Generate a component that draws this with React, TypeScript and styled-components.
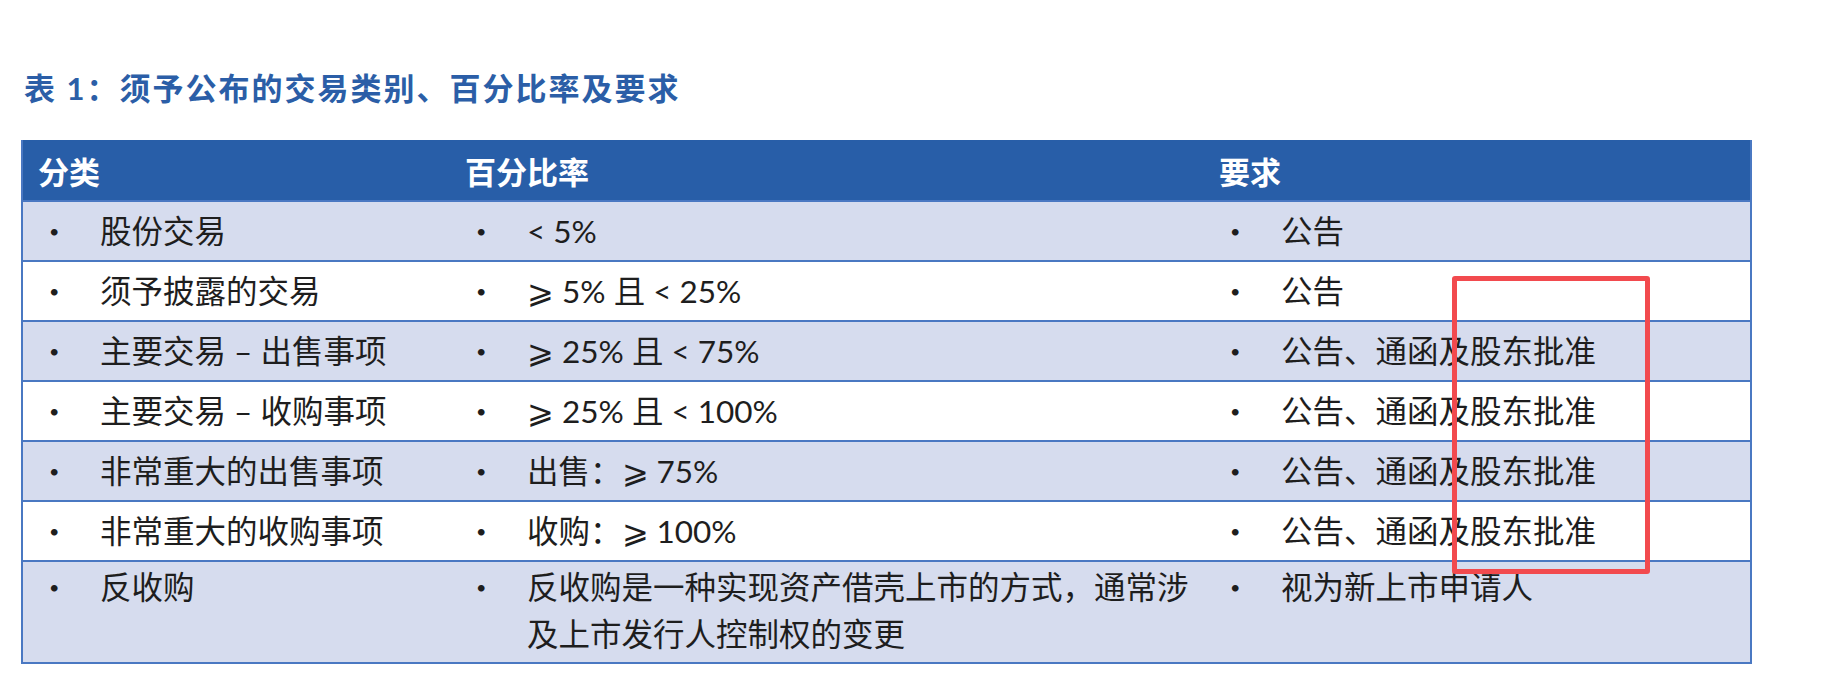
import React from 'react';
import styled, { createGlobalStyle } from 'styled-components';

type Row = {
  category: string;
  ratio: React.ReactNode;
  requirement: string;
};

const rows: Row[] = [
  { category: '股份交易', ratio: '< 5%', requirement: '公告' },
  { category: '须予披露的交易', ratio: '⩾ 5% 且 < 25%', requirement: '公告' },
  { category: '主要交易 – 出售事项', ratio: '⩾ 25% 且 < 75%', requirement: '公告、通函及股东批准' },
  { category: '主要交易 – 收购事项', ratio: '⩾ 25% 且 < 100%', requirement: '公告、通函及股东批准' },
  { category: '非常重大的出售事项', ratio: '出售：⩾ 75%', requirement: '公告、通函及股东批准' },
  { category: '非常重大的收购事项', ratio: '收购：⩾ 100%', requirement: '公告、通函及股东批准' },
  {
    category: '反收购',
    ratio: (
      <>
        反收购是一种实现资产借壳上市的方式，通常涉
        <br />
        及上市发行人控制权的变更
      </>
    ),
    requirement: '视为新上市申请人',
  },
];

const App: React.FC = () => {
  return (
    <Page>
      <GlobalStyle />
      <Title>表 1：须予公布的交易类别、百分比率及要求</Title>
      <Table>
        <HeaderRow>
          <HeaderCell>分类</HeaderCell>
          <HeaderCell>百分比率</HeaderCell>
          <HeaderCell>要求</HeaderCell>
        </HeaderRow>
        {rows.map((row, i) => {
          const tall = i === rows.length - 1;
          return (
            <BodyRow key={row.category} $shaded={i % 2 === 0} $tall={tall}>
              <Cell>
                <Bullet>•</Bullet>
                <CellText>{row.category}</CellText>
              </Cell>
              <Cell>
                <Bullet>•</Bullet>
                <CellText>{row.ratio}</CellText>
              </Cell>
              <Cell>
                <Bullet>•</Bullet>
                <CellText>{row.requirement}</CellText>
              </Cell>
            </BodyRow>
          );
        })}
      </Table>
      <Highlight />
    </Page>
  );
};

export default App;

const GlobalStyle = createGlobalStyle`
  body {
    margin: 0;
    background: #ffffff;
    font-family: "Lato", "Noto Sans CJK SC", sans-serif;
  }
`;

const Page = styled.div`
  position: relative;
  width: 1834px;
  height: 690px;
  padding: 68px 0 0 21px;
  box-sizing: border-box;
`;

const Title = styled.h2`
  margin: 0 0 32px 3px;
  font-size: 31px;
  line-height: 40px;
  font-weight: 700;
  letter-spacing: 2px;
  color: #2b5ea7;
  white-space: nowrap;
`;

const Table = styled.div`
  width: 1731px;
  border: 2px solid #4a78c2;
  border-top: none;
  box-sizing: border-box;
`;

const HeaderRow = styled.div`
  display: grid;
  grid-template-columns: 427px 754px 1fr;
  height: 60px;
  background: #285ea8;
  align-items: center;
`;

const HeaderCell = styled.div`
  padding-left: 15px;
  color: #ffffff;
  font-size: 31px;
  font-weight: 700;
`;

const BodyRow = styled.div<{ $shaded: boolean; $tall: boolean }>`
  display: grid;
  grid-template-columns: 427px 754px 1fr;
  height: ${(p) => (p.$tall ? '102px' : '60px')};
  border-top: 2px solid #4a78c2;
  background: ${(p) => (p.$shaded ? '#d6dcee' : '#ffffff')};
  align-items: ${(p) => (p.$tall ? 'start' : 'center')};
  padding-top: ${(p) => (p.$tall ? '2px' : '0')};
  box-sizing: border-box;
`;

const Cell = styled.div`
  display: flex;
  align-items: flex-start;
  padding-left: 26px;
  color: #1e1e1e;
  font-size: 31.5px;
  line-height: 47px;
`;

const Bullet = styled.span`
  width: 51px;
  flex-shrink: 0;
  font-size: 18px;
`;

const CellText = styled.span`
  white-space: nowrap;
`;

const Highlight = styled.div`
  position: absolute;
  left: 1452px;
  top: 276px;
  width: 198px;
  height: 298px;
  border: 5px solid #f24a4e;
  border-radius: 3px;
  box-sizing: border-box;
`;
